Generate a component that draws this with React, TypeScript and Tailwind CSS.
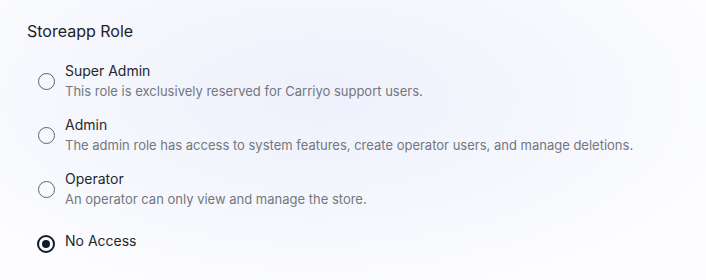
import React from "react";

type Role = { name: string; desc?: string; selected?: boolean };

const roles: Role[] = [
  { name: "Super Admin", desc: "This role is exclusively reserved for Carriyo support users." },
  { name: "Admin", desc: "The admin role has access to system features, create operator users, and manage deletions." },
  { name: "Operator", desc: "An operator can only view and manage the store." },
  { name: "No Access", selected: true },
];

function Radio({ selected }: { selected?: boolean }) {
  return (
    <span className="flex w-[18px] shrink-0 items-center justify-center">
      {selected ? (
        <span className="flex h-[18px] w-[18px] items-center justify-center rounded-full border-2 border-[#111b2e]">
          <span className="h-2 w-2 rounded-full bg-[#111b2e]" />
        </span>
      ) : (
        <span className="h-[17px] w-[17px] rounded-full border-[1.5px] border-[#5f6368]" />
      )}
    </span>
  );
}

export default function App() {
  return (
    <div
      className="h-[280px] w-[706px] overflow-hidden bg-[radial-gradient(ellipse_at_45%_35%,#eef1fc_0%,#f5f7fd_45%,#fdfdff_80%)] px-[27px] pt-[19px]"
      style={{ fontFamily: "Inter, 'Noto Sans', sans-serif" }}
    >
      <div className="text-[16px] leading-6 text-[#1f2128]">Storeapp Role</div>
      <div className="mt-[18px] flex flex-col gap-[13px] pl-[10px]">
        {roles.map((r) => (
          <div key={r.name} className="flex min-h-[41px] items-center gap-[10px]">
            <Radio selected={r.selected} />
            <div className={r.desc ? "flex flex-col" : "flex flex-col pb-[5px]"}>
              <div className="text-[14px] leading-5 text-[#25272d]">{r.name}</div>
              {r.desc && <div className="text-[13px] leading-[21px] text-[#74767d]">{r.desc}</div>}
            </div>
          </div>
        ))}
      </div>
    </div>
  );
}
